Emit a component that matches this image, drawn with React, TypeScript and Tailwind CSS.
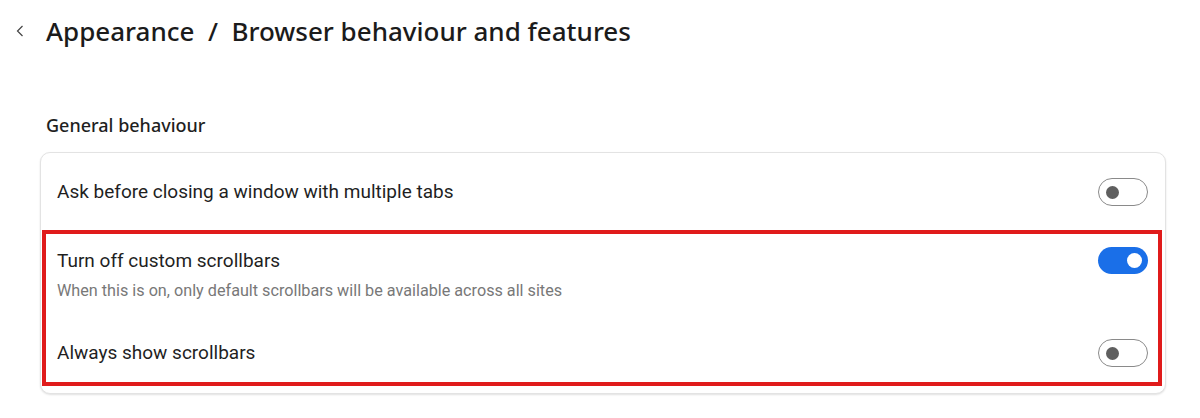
import React from 'react'

function Toggle({ on }: { on: boolean }) {
  if (on) {
    return (
      <div className="flex h-[27px] w-[50px] items-center justify-end rounded-full bg-[#1a6fe8] pr-[6px]">
        <div className="h-[15px] w-[15px] rounded-full bg-white" />
      </div>
    )
  }
  return (
    <div className="flex h-[28px] w-[50px] items-center rounded-full border border-[#8a8a8a] bg-white pl-[7px]">
      <div className="h-[13px] w-[13px] rounded-full bg-[#5f5f5f]" />
    </div>
  )
}

function Row({ title, desc, on }: { title: string; desc?: string; on: boolean }) {
  return (
    <div className="flex items-start justify-between">
      <div className="pt-px">
        <div className="text-[19px] leading-[26px] text-[#1f1f1f]">{title}</div>
        {desc && <div className="mt-[6px] text-[16.2px] leading-[21px] text-[#787878]">{desc}</div>}
      </div>
      <Toggle on={on} />
    </div>
  )
}

export default function App() {
  return (
    <div className="min-h-[418px] bg-white font-['Roboto',sans-serif]">
      {/* Header */}
      <div className="flex items-center pl-[16px] pt-[13px]">
        <svg className="h-[12px] w-[8px] text-[#444]" viewBox="0 0 8 12" fill="none" stroke="currentColor" strokeWidth={1.2}>
          <path d="M6.5 1L1.5 6l5 5" />
        </svg>
        <h1 className="ml-[22px] font-['Noto_Sans',sans-serif] text-[26px] font-medium leading-[36px] text-[#1b1b1b]">
          Appearance&nbsp; / &nbsp;Browser behaviour and features
        </h1>
      </div>

      {/* Section */}
      <div className="pl-[40px] pr-[34px]">
        <h2 className="mt-[63px] pl-[6px] font-['Noto_Sans',sans-serif] text-[18px] font-medium leading-[26px] text-[#1f1f1f]">
          General behaviour
        </h2>

        <div className="mt-[14px] rounded-[10px] border border-[#e3e3e3] bg-white pb-[7px] shadow-[0_1px_2px_rgba(0,0,0,0.12)]">
          <div className="pb-[24px] pl-[16px] pr-[17px] pt-[25px]">
            <Row title="Ask before closing a window with multiple tabs" on={false} />
          </div>

          <div className="ml-[1px] mr-[3px] border-4 border-[#e01b1b] pb-[15px] pl-[11px] pr-[10px] pt-[13px]">
            <Row
              title="Turn off custom scrollbars"
              desc="When this is on, only default scrollbars will be available across all sites"
              on={true}
            />
            <div className="mt-[38px]">
              <Row title="Always show scrollbars" on={false} />
            </div>
          </div>
        </div>
      </div>
    </div>
  )
}
